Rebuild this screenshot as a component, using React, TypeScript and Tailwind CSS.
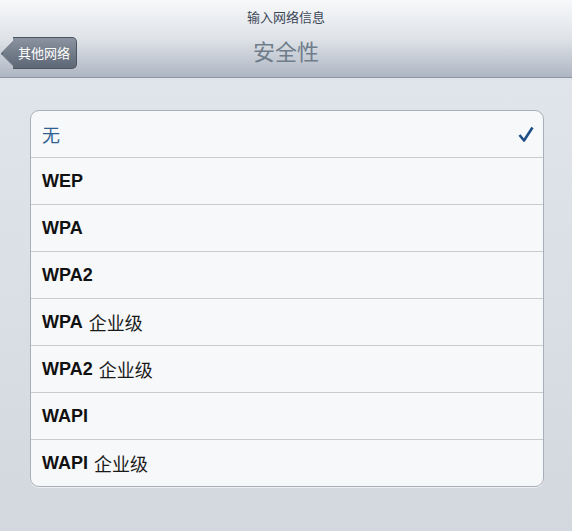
import React from "react";

const rows: { latin?: string; cjk?: string; selected?: boolean }[] = [
  { cjk: "无", selected: true },
  { latin: "WEP" },
  { latin: "WPA" },
  { latin: "WPA2" },
  { latin: "WPA", cjk: "企业级" },
  { latin: "WPA2", cjk: "企业级" },
  { latin: "WAPI" },
  { latin: "WAPI", cjk: "企业级" },
];

const cjkFont = "[font-family:'Noto_Sans_CJK_SC','Liberation_Sans',sans-serif]";

export default function App() {
  return (
    <div className="w-[572px] h-[531px] overflow-hidden bg-gradient-to-b from-[#e3e7ed] to-[#d3d8df] [font-family:'Liberation_Sans','Noto_Sans_CJK_SC',sans-serif]">
      <div className="relative h-[78px] border-b border-[#8e96a2] bg-gradient-to-b from-[#f7f8fa] via-[#dfe3e8] to-[#aeb6c3]">
        <div className="flex flex-col items-center pt-[7px]">
          <div className={`text-[13px] leading-[20px] text-[#3c4858] ${cjkFont}`}>输入网络信息</div>
          <div className={`mt-[10px] text-[22px] leading-[27px] text-[#6f7c8a] ${cjkFont}`}>安全性</div>
        </div>
        <div className="absolute left-[5px] top-[37px] flex h-[32px] items-center">
          <div className="h-[23px] w-[23px] -mr-[15px] rotate-45 rounded-[3px] border-b border-l border-[#4c5562] bg-gradient-to-br from-[#8a939f] to-[#5c6674]" />
          <div className={`relative flex h-[32px] items-center rounded-r-[5px] border border-l-0 border-[#4c5562] bg-gradient-to-b from-[#8a939f] to-[#5d6775] pl-[5px] pr-[6px] text-[13px] text-white ${cjkFont}`}>
            其他网络
          </div>
        </div>
      </div>
      <div className="pl-[30px] pr-[28px] pt-[32px]">
        <div className="overflow-hidden rounded-[9px] border border-[#a9afb7] bg-[#f7f8f9] shadow-[0_1px_0_rgba(255,255,255,0.6)]">
          {rows.map((r, i) => (
            <div
              key={i}
              className={`flex items-center justify-between pl-[11px] pr-[9px] ${i > 0 ? "h-[47px] border-t border-[#c9cbce]" : "h-[46px]"}`}
            >
              <div className="flex items-center gap-[6px]">
                {r.latin && (
                  <span className="text-[18px] font-bold text-[#111] [font-family:'Liberation_Sans',sans-serif]">{r.latin}</span>
                )}
                {r.cjk && (
                  <span className={`text-[18px] ${r.selected ? "text-[#2f5f92]" : "text-[#1a1a1a]"} ${cjkFont}`}>{r.cjk}</span>
                )}
              </div>
              {r.selected && (
                <svg width="16" height="17" viewBox="0 0 16 17">
                  <path d="M1.5 9 L6 14.5 L14.5 1.5" fill="none" stroke="#1f4f86" strokeWidth="2.6" strokeLinejoin="round" />
                </svg>
              )}
            </div>
          ))}
        </div>
      </div>
    </div>
  );
}
